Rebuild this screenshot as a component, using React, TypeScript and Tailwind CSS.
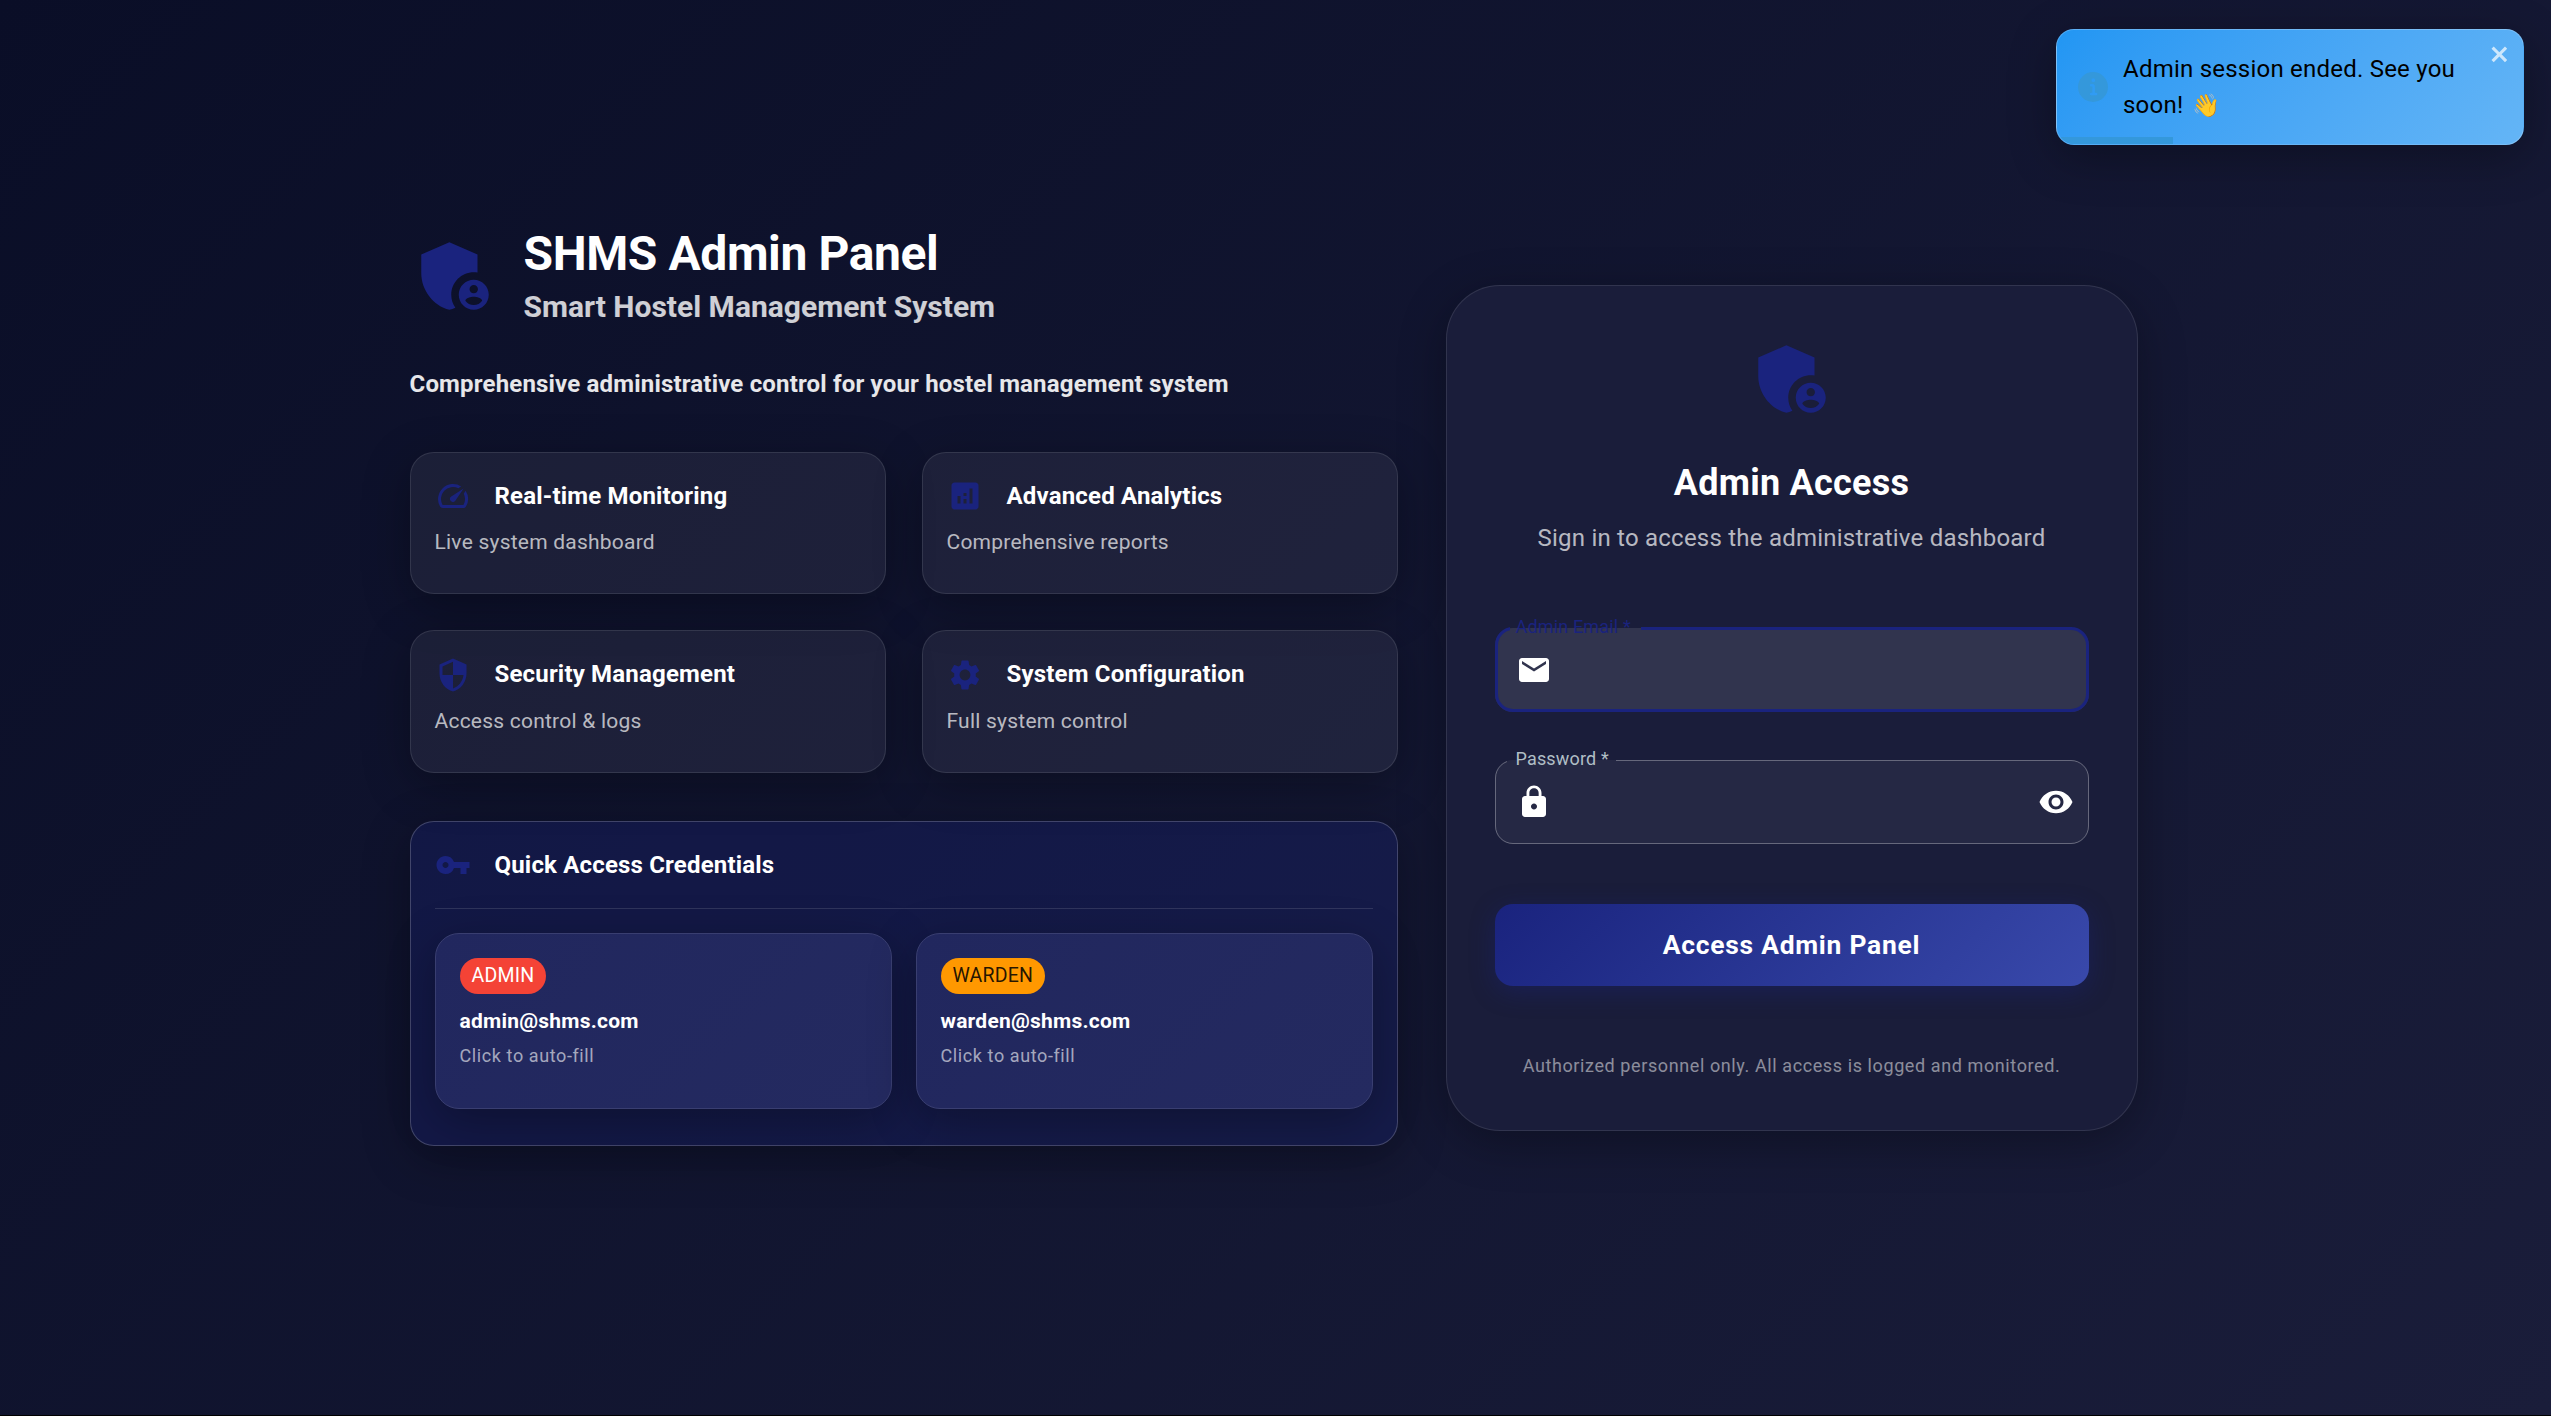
import React, { ReactNode } from "react";
import {
  MdAdminPanelSettings,
  MdAnalytics,
  MdEmail,
  MdLock,
  MdSecurity,
  MdSettings,
  MdSpeed,
  MdVisibility,
  MdVpnKey,
} from "react-icons/md";

const features = [
  { icon: MdSpeed, title: "Real-time Monitoring", text: "Live system dashboard" },
  { icon: MdAnalytics, title: "Advanced Analytics", text: "Comprehensive reports" },
  { icon: MdSecurity, title: "Security Management", text: "Access control & logs" },
  { icon: MdSettings, title: "System Configuration", text: "Full system control" },
];

const credentials = [
  { role: "ADMIN", email: "admin@shms.com", chip: "bg-[#f44336] text-white" },
  { role: "WARDEN", email: "warden@shms.com", chip: "bg-[#ff9800] text-black/87" },
];

function Toast() {
  return (
    <div className="absolute top-[29px] right-[27px] flex h-[116px] w-[468px] items-center overflow-hidden rounded-[18px] border border-white/20 bg-linear-135 from-[#2196f3] to-[#64b5f6] pl-[21px] shadow-[0_12px_48px_rgba(0,0,0,0.3)]">
      <svg className="size-[30px] shrink-0 text-[#3498db]" viewBox="0 0 24 24" fill="currentColor">
        <path d="M12 0a12 12 0 1012 12A12.013 12.013 0 0012 0zm.25 5a1.5 1.5 0 11-1.5 1.5 1.5 1.5 0 011.5-1.5zm2.25 13.5h-4a1 1 0 010-2h.75a.25.25 0 00.25-.25v-4.5a.25.25 0 00-.25-.25h-.75a1 1 0 010-2h1a2 2 0 012 2v4.75a.25.25 0 00.25.25h.75a1 1 0 110 2z" />
      </svg>
      <div className="ml-[15px] w-[350px] text-[24px] leading-[36px] tracking-[0.00938em] text-black">
        <p>Admin session ended. See you</p>
        <div className="flex gap-[9px]">
          <span>soon!</span>
          <span className="text-[22.5px]">👋</span>
        </div>
      </div>
      <svg className="absolute top-[12px] right-[12.5px] h-6 w-[21px] text-white/70" viewBox="0 0 14 16" fill="currentColor">
        <path
          fillRule="evenodd"
          d="M7.71 8.23l3.75 3.75-1.48 1.48-3.75-3.75-3.75 3.75L1 11.98l3.75-3.75L1 4.48 2.48 3l3.75 3.75L9.98 3l1.48 1.48-3.75 3.75z"
        />
      </svg>
      <div className="absolute bottom-0 left-0 h-[7px] w-[116px] bg-[#3498db]" />
    </div>
  );
}

function FeatureCard({ icon: Icon, title, text }: (typeof features)[number]) {
  return (
    <div className="rounded-[24px] border border-white/10 bg-white/6 px-6 pt-6 pb-9 shadow-[0_12px_48px_rgba(0,0,0,0.3)]">
      <div className="mb-3 flex items-center gap-6">
        <Icon className="size-9 text-[#1a237e]" />
        <h3 className="text-[24px] leading-[38.4px] font-bold tracking-[0.0075em]">{title}</h3>
      </div>
      <p className="text-[21px] leading-[30px] tracking-[0.01071em] text-white/70">{text}</p>
    </div>
  );
}

function Field({
  label,
  focused,
  icon,
  action,
}: {
  label: string;
  focused?: boolean;
  icon: ReactNode;
  action?: ReactNode;
}) {
  return (
    <div
      className={`relative flex h-[84px] items-center justify-between rounded-[18px] pr-[15px] pl-[21px] ${
        focused ? "bg-white/10" : "bg-white/5"
      }`}
    >
      {icon}
      {action}
      <fieldset
        className={`absolute inset-x-0 -top-[7.5px] bottom-0 min-w-0 rounded-[18px] px-[11px] ${
          focused ? "border-3 border-[#1a237e] pl-[12px]" : "border border-white/30"
        }`}
      >
        <legend className="invisible h-[16px] px-[8px] text-[18px] leading-[16px] tracking-[0.00938em]">{label}</legend>
      </fieldset>
      <span
        className={`absolute -top-[14px] left-[21px] text-[18px] leading-[26px] tracking-[0.00938em] ${
          focused ? "text-[#1a237e]" : "text-[#b0bec5]"
        }`}
      >
        {label}
      </span>
    </div>
  );
}

export default function App() {
  return (
    <div className="relative flex h-[1416px] w-[2551px] items-center overflow-hidden bg-linear-135 from-[#0a0e27] to-[#1a1d3a] pl-[409.5px] font-[Roboto,sans-serif] text-white">
      <main className="flex items-center gap-12">
        <section className="mb-[49.2px] w-[988px]">
          <header className="mb-[34px] flex items-center gap-6">
            <MdAdminPanelSettings className="size-[90px] text-[#1a237e]" />
            <div className="pt-[5px]">
              <h1 className="mb-px text-[48px] leading-[56px] font-bold tracking-[-0.4px]">SHMS Admin Panel</h1>
              <p className="text-[30px] leading-[48px] font-bold text-white/80">Smart Hostel Management System</p>
            </div>
          </header>
          <h2 className="mb-[49px] text-[24px] leading-[38.4px] font-bold tracking-[0.0075em] text-white/90">
            Comprehensive administrative control for your hostel management system
          </h2>
          <div className="mb-12 grid grid-cols-2 gap-9">
            {features.map((feature) => (
              <FeatureCard key={feature.title} {...feature} />
            ))}
          </div>
          <div className="rounded-[24px] border border-white/20 bg-[#1a237e]/30 px-6 pt-6 pb-9 shadow-[0_12px_48px_rgba(0,0,0,0.3)]">
            <div className="flex items-center gap-6">
              <MdVpnKey className="size-9 text-[#1a237e]" />
              <h3 className="text-[24px] leading-[38.4px] font-bold tracking-[0.0075em]">Quick Access Credentials</h3>
            </div>
            <div className="my-6 h-px bg-white/12" />
            <div className="grid grid-cols-2 gap-6">
              {credentials.map(({ role, email, chip }) => (
                <div
                  key={role}
                  className="flex flex-col items-start rounded-[24px] border border-[#393e70] bg-linear-135 from-[#21275e] to-[#242a60] px-6 pt-6 pb-[37px] shadow-[0_12px_48px_rgba(0,0,0,0.3)]"
                >
                  <span className={`mb-3 h-9 rounded-full px-3 text-[19.5px] leading-[35px] tracking-[0.01em] ${chip}`}>
                    {role}
                  </span>
                  <span className="mb-[5px] text-[21px] leading-[30px] font-bold tracking-[0.01071em]">{email}</span>
                  <span className="text-[18px] leading-[30px] tracking-[0.03333em] text-white/60">
                    Click to auto-fill
                  </span>
                </div>
              ))}
            </div>
          </div>
        </section>

        <section className="flex h-[846px] w-[692px] flex-col items-center rounded-[54px] border border-white/10 bg-[#1a1d3a] p-12 shadow-[0_12px_48px_rgba(0,0,0,0.3)]">
          <MdAdminPanelSettings className="size-[90px] text-[#1a237e]" />
          <h2 className="mt-[37px] text-[36px] leading-[44px] font-bold tracking-[0.00735em]">Admin Access</h2>
          <p className="mt-[15px] text-[24px] leading-9 tracking-[0.00938em] text-white/70">
            Sign in to access the administrative dashboard
          </p>
          <div className="mt-[72px] flex w-full flex-col gap-12">
            <Field label="Admin Email *" focused icon={<MdEmail className="size-9" />} />
            <Field
              label="Password *"
              icon={<MdLock className="size-9" />}
              action={<MdVisibility className="size-9" />}
            />
          </div>
          <button className="mt-[60px] h-[82px] w-full rounded-[18px] bg-linear-135 from-[#1a237e] to-[#3949ab] pt-0.5 text-[26.4px] font-bold tracking-[0.75px] shadow-[0_6px_24px_rgba(26,35,126,0.4)]">
            Access Admin Panel
          </button>
          <p className="mt-[65px] text-[18px] leading-[30px] tracking-[0.03333em] text-white/50">
            Authorized personnel only. All access is logged and monitored.
          </p>
        </section>
      </main>
      <Toast />
      <div className="absolute inset-x-0 bottom-0 h-px bg-black" />
    </div>
  );
}
